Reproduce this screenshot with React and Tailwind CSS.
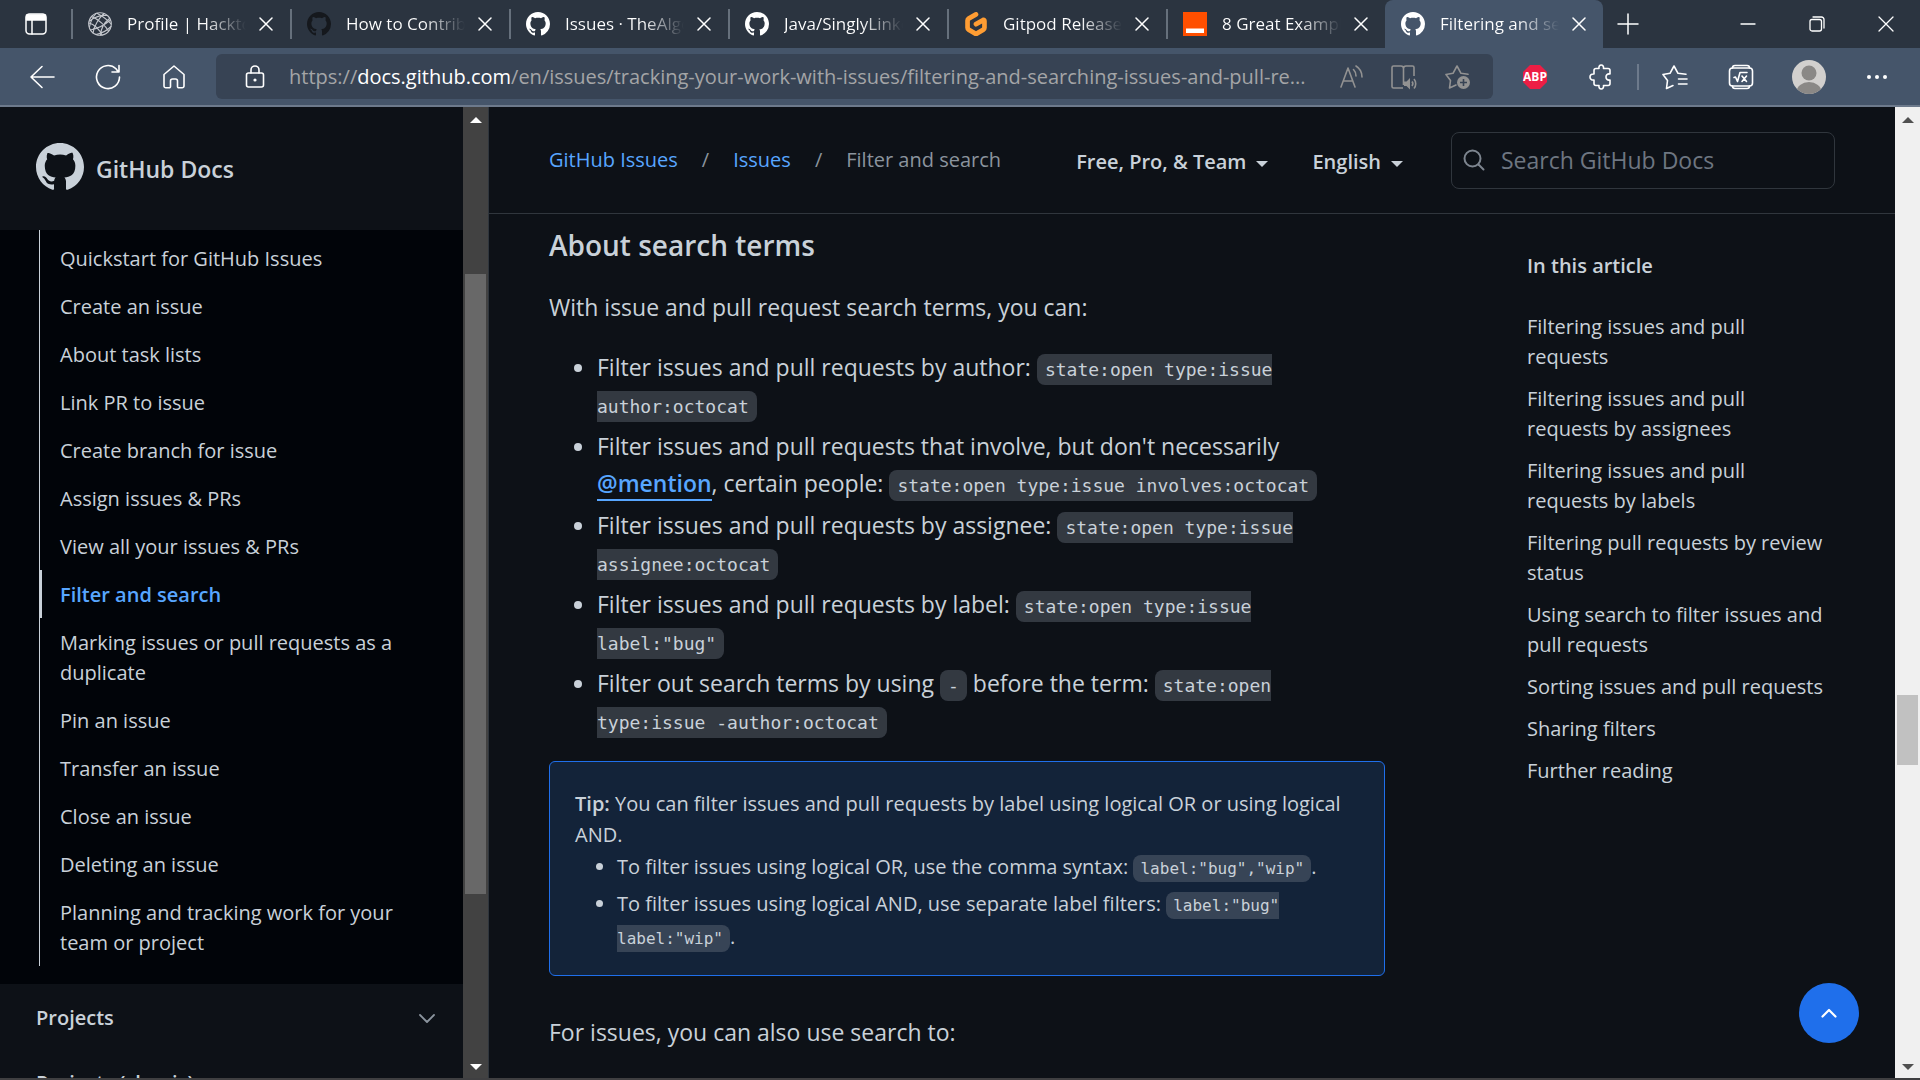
import React from "react";
import { SiGitpod } from "react-icons/si";

const MARK =
  "M8 0C3.58 0 0 3.58 0 8c0 3.54 2.29 6.53 5.47 7.59.4.07.55-.17.55-.38 0-.19-.01-.82-.01-1.49-2.01.37-2.53-.49-2.69-.94-.09-.23-.48-.94-.82-1.13-.28-.15-.68-.52-.01-.53.63-.01 1.08.58 1.23.82.72 1.21 1.87.87 2.33.66.07-.52.28-.87.51-1.07-1.78-.2-3.64-.89-3.64-3.95 0-.87.31-1.59.82-2.15-.08-.2-.36-1.02.08-2.12 0 0 .67-.21 2.2.82.64-.18 1.32-.27 2-.27.68 0 1.36.09 2 .27 1.53-1.04 2.2-.82 2.2-.82.44 1.1.16 1.92.08 2.12.51.56.82 1.27.82 2.15 0 3.07-1.87 3.75-3.65 3.95.29.25.54.73.54 1.48 0 1.07-.01 1.93-.01 2.2 0 .21.15.46.55.38A8.013 8.013 0 0016 8c0-4.42-3.58-8-8-8z";

function GitHubMark({ className }) {
  return (
    <svg viewBox="0 0 16 16" className={className} fill="currentColor" aria-hidden="true">
      <path d={MARK} />
    </svg>
  );
}

function Line({ className = "size-6", box = 24, width = 1.5, children }) {
  return (
    <svg
      viewBox={`0 0 ${box} ${box}`}
      className={className}
      fill="none"
      stroke="currentColor"
      strokeWidth={width}
      strokeLinecap="round"
      strokeLinejoin="round"
      aria-hidden="true"
    >
      {children}
    </svg>
  );
}

function GlobeIcon() {
  return (
    <Line className="size-6 text-[#c3c6cc]" width={1.1}>
      <circle cx="12" cy="12" r="11.3" />
      <path d="M9 1.200C14 4 20 8 23 12M3.500 4.500C10 7 18 14 20.500 19M1 11c5 1 11 7 13 12" />
      <path d="M16 1.500C11 6 6 14 5 21M21.500 6.500C17 10 13 16 12.500 23M8 1.500C5 5 2.500 9 1.500 15M1.500 9C8 4 14 3 19 3.500M2.500 18c6-1 14-5 20-10M8 22.500c6-1 11-4 15-8" />
    </Line>
  );
}

function DocIcon() {
  return (
    <svg viewBox="0 0 24 24" className="size-6" aria-hidden="true">
      <path fill="#ff4f00" d="M0 0h24v24H0z" />
      <path fill="#fff" d="M3 16.500h18v4.500H3z" />
    </svg>
  );
}

const TABS = [
  { title: "Profile | Hacktoberfest", icon: <GlobeIcon /> },
  { title: "How to Contribute", icon: <GitHubMark className="size-6 text-[#15181d]" /> },
  { title: "Issues · TheAlgorithms", icon: <GitHubMark className="size-6" /> },
  { title: "Java/SinglyLinkedList", icon: <GitHubMark className="size-6" /> },
  { title: "Gitpod Releases", icon: <SiGitpod className="size-6 text-[#ff9d33]" /> },
  { title: "8 Great Examples", icon: <DocIcon /> },
  { title: "Filtering and searching", icon: <GitHubMark className="size-6" />, active: true },
];

function CloseIcon() {
  return (
    <Line className="size-3.5" box={14}>
      <path d="M1 1l12 12M13 1L1 13" />
    </Line>
  );
}

function Tab({ tab }) {
  return (
    <div
      className={
        tab.active
          ? "flex h-12 w-[218px] min-w-0 items-center rounded-t-lg bg-[#45556a] pl-4 pr-3"
          : "flex h-12 w-[219px] min-w-0 items-center"
      }
    >
      {!tab.active && <span className="mr-[15px] h-[30px] w-0.5 shrink-0 bg-[#66707c]" />}
      <span className="shrink-0">{tab.icon}</span>
      <span className="ml-[15px] min-w-0 flex-1 overflow-hidden whitespace-nowrap bg-linear-to-r from-white from-65% to-transparent bg-clip-text text-[17px] text-transparent">
        {tab.title}
      </span>
      <button
        aria-label={`Close ${tab.title}`}
        className={tab.active ? "ml-2 flex w-6 justify-center" : "ml-2 mr-3 flex w-6 justify-center"}
      >
        <CloseIcon />
      </button>
    </div>
  );
}

function TabBar() {
  return (
    <div className="flex h-12 shrink-0 items-center bg-[#2b3440] text-white">
      <button aria-label="Tab actions" className="flex w-[71px] shrink-0 justify-center">
        <Line className="size-6">
          <rect x="2" y="2" width="20" height="20" rx="3.500" />
          <path d="M2.500 3h19v5h-19z" fill="currentColor" />
          <path d="M8 8v14" />
        </Line>
      </button>
      {TABS.map((tab) => (
        <Tab key={tab.title} tab={tab} />
      ))}
      <button aria-label="New tab" className="ml-3.5 shrink-0">
        <Line className="size-[22px]" box={22}>
          <path d="M11 1v20M1 11h20" />
        </Line>
      </button>
      <div className="ml-auto flex shrink-0">
        <button aria-label="Minimize" className="flex w-[69px] justify-center">
          <Line className="size-4" box={16} width={1.3}>
            <path d="M1 8h14" />
          </Line>
        </button>
        <button aria-label="Restore" className="flex w-[69px] justify-center">
          <Line className="size-4" box={16} width={1.3}>
            <rect x="1" y="3.500" width="11.500" height="11.500" rx="2" />
            <path d="M4 1h8.500A2.500 2.500 0 0 1 15 3.500V12" />
          </Line>
        </button>
        <button aria-label="Close window" className="flex w-[69px] justify-center">
          <Line className="size-4" box={16} width={1.3}>
            <path d="M1 1l14 14M15 1L1 15" />
          </Line>
        </button>
      </div>
    </div>
  );
}

function ToolButton({ label, children }) {
  return (
    <button aria-label={label} className="flex w-[66px] shrink-0 justify-center">
      {children}
    </button>
  );
}

function Toolbar() {
  return (
    <div className="flex h-[59px] shrink-0 items-center border-b-2 border-[#6d7a8c] bg-[#45556a] pl-[9px] pr-[14px] text-white">
      <ToolButton label="Back">
        <Line className="size-[26px]" box={26} width={1.6}>
          <path d="M25 13H2M13 2.500L2 13l11 10.500" />
        </Line>
      </ToolButton>
      <ToolButton label="Refresh">
        <Line className="size-[26px]" box={26} width={1.6}>
          <path d="M24.500 13A11.500 11.500 0 1 1 21 4.800L23 7.500M24 1.500V8h-7" />
        </Line>
      </ToolButton>
      <ToolButton label="Home">
        <Line className="size-[26px]" box={26} width={1.6}>
          <path d="M3 10.500L13 2l10 8.500V22a1.800 1.800 0 0 1-1.800 1.800h-3.400A1.300 1.300 0 0 1 16.500 22.500V17a2 2 0 0 0-2-2h-3a2 2 0 0 0-2 2v5.500a1.300 1.300 0 0 1-1.300 1.300H4.800A1.800 1.800 0 0 1 3 22z" />
        </Line>
      </ToolButton>

      <div className="ml-[9px] flex h-[45px] min-w-0 flex-1 items-center rounded-md bg-[#374354] pl-[27px] pr-[22px]">
        <Line className="size-6 shrink-0" width={1.6}>
          <rect x="3.500" y="8" width="17" height="14" rx="2" />
          <path d="M8 8V5a4 4 0 0 1 8 0v3" />
          <circle cx="12" cy="15" r=".8" fill="currentColor" />
        </Line>
        <div className="ml-[22px] min-w-0 flex-1 truncate text-[20px] text-[#a4a5a7]">
          https://<span className="text-white">docs.github.com</span>
          /en/issues/tracking-your-work-with-issues/filtering-and-searching-issues-and-pull-re...
        </div>
        <div className="flex shrink-0 items-center gap-7 text-[#929292]">
          <button aria-label="Read aloud">
            <Line width={1.6}>
              <path d="M2 22L9 3l7 19M4.500 16h9M14.500 4.500c2 2 2.500 4 2.500 6.500M17 1c4 2.500 6 6.500 6 11" />
            </Line>
          </button>
          <button aria-label="Immersive reader">
            <svg viewBox="0 0 26 26" className="size-[26px]" aria-hidden="true">
              <path
                d="M12 24H2.500A1.500 1.500 0 0 1 1 22.500v-19A1.500 1.500 0 0 1 2.500 2H10a2.500 2.500 0 0 1 2.500 2.500V21M12.500 4.500A2.500 2.500 0 0 1 15 2h6.500A1.500 1.500 0 0 1 23 3.500V12"
                fill="none"
                stroke="currentColor"
                strokeWidth="1.6"
              />
              <path d="M13 17.500h2.500L19 14v11.500L15.500 22H13z" fill="currentColor" />
              <path
                d="M21 17.500c1 1.300 1 3.200 0 4.500M23 15c2.300 2.700 2.300 7 0 9.500"
                fill="none"
                stroke="currentColor"
                strokeWidth="1.6"
              />
            </svg>
          </button>
          <button aria-label="Add to favorites">
            <svg viewBox="0 0 26 26" className="size-[26px]" aria-hidden="true">
              <path
                d="M11 21l-6.500 3 1-7.500L1 10.500l7-1.200L12 2l4 7.300 7 1"
                fill="none"
                stroke="currentColor"
                strokeWidth="1.6"
                strokeLinejoin="round"
                strokeLinecap="round"
              />
              <circle cx="18.500" cy="18.500" r="6.500" fill="currentColor" />
              <path d="M18.500 15v7M15 18.500h7" stroke="#374354" strokeWidth="1.6" />
            </svg>
          </button>
        </div>
      </div>

      <div className="ml-[9px] flex shrink-0 items-center">
        <ToolButton label="Adblock Plus">
          <span className="relative flex size-[26px] items-center justify-center">
            <svg viewBox="0 0 26 26" className="absolute inset-0" aria-hidden="true">
              <path d="M8 1h10l7 7v10l-7 7H8l-7-7V8z" fill="#ed1e45" />
            </svg>
            <span className="relative text-[12px] font-bold leading-none">ABP</span>
          </span>
        </ToolButton>
        <ToolButton label="Extensions">
          <Line className="size-[26px]" box={26} width={1.6}>
            <path d="M8 4.500h3C10.600 2.500 11.600 1 13.200 1s2.700 1.500 2.300 3.500H20a2 2 0 0 1 2 2V10c-2.800-.5-4 1-4 3s1.200 3.500 4 3v3.500a2 2 0 0 1-2 2h-4.500c.4 2-.7 3.500-2.300 3.500s-2.600-1.500-2.200-3.500H8a2 2 0 0 1-2-2V16c-2.500.3-4-1-4-3s1.500-3.300 4-3V6.500a2 2 0 0 1 2-2z" />
          </Line>
        </ToolButton>
        <span className="mx-[3px] h-[26px] w-0.5 bg-[#6d7a8c]" />
        <ToolButton label="Favorites">
          <Line className="size-[26px]" box={26} width={1.6}>
            <path d="M11 21.500l-6.500 3 1-8L1 10.500l7-1.200L12 2l4 7.300 8 .9M16.500 15H25M16.500 20H25" />
          </Line>
        </ToolButton>
        <ToolButton label="Math solver">
          <Line className="size-[26px]" box={26} width={1.6}>
            <rect x="1.500" y="4" width="23" height="18" rx="3" />
            <path d="M4.500 4c0-2 .8-2.500 2.500-2.500h12c1.700 0 2.500.5 2.500 2.500M4.500 22c0 2 .8 2.500 2.500 2.500h12c1.700 0 2.500-.5 2.500-2.500" />
            <path d="M6 13.500l1.500-.5 2 4.500L12 8.500h7M14 12l4.500 5.500M18.500 12L14 17.500" />
          </Line>
        </ToolButton>
        <ToolButton label="Profile">
          <svg viewBox="0 0 34 34" className="ml-1 size-[34px]" aria-hidden="true">
            <defs>
              <clipPath id="avatar">
                <circle cx="17" cy="17" r="17" />
              </clipPath>
            </defs>
            <g clipPath="url(#avatar)">
              <path fill="#d2d0ce" d="M0 0h34v34H0z" />
              <circle cx="17" cy="13" r="7.500" fill="#8a8886" />
              <ellipse cx="17" cy="32" rx="12.500" ry="10" fill="#8a8886" />
            </g>
          </svg>
        </ToolButton>
        <ToolButton label="Settings and more">
          <svg viewBox="0 0 20 6" className="ml-2 h-1.5 w-5" fill="currentColor" aria-hidden="true">
            <circle cx="2" cy="3" r="2" />
            <circle cx="10" cy="3" r="2" />
            <circle cx="18" cy="3" r="2" />
          </svg>
        </ToolButton>
      </div>
    </div>
  );
}

function Arrow({ down }) {
  return (
    <svg viewBox="0 0 12 6" className="h-1.5 w-3 shrink-0" fill="currentColor" aria-hidden="true">
      <path d={down ? "M0 0h12L6 6z" : "M0 6h12L6 0z"} />
    </svg>
  );
}

const NAV = [
  "Quickstart for GitHub Issues",
  "Create an issue",
  "About task lists",
  "Link PR to issue",
  "Create branch for issue",
  "Assign issues & PRs",
  "View all your issues & PRs",
  "Filter and search",
  "Marking issues or pull requests as a duplicate",
  "Pin an issue",
  "Transfer an issue",
  "Close an issue",
  "Deleting an issue",
  "Planning and tracking work for your team or project",
];

function Sidebar() {
  return (
    <aside className="flex w-[489px] shrink-0 border-r border-[#30363d]">
      <div className="flex min-w-0 flex-1 flex-col overflow-hidden">
        <a href="#" className="flex h-[123px] shrink-0 items-center gap-3 pb-[3px] pl-9">
          <GitHubMark className="size-12" />
          <span className="pt-1 text-[23px] font-semibold">GitHub Docs</span>
        </a>
        <nav className="shrink-0 bg-[#010409] pb-[18px] pl-[39px]">
          <ul className="border-l border-[#c9d1d9] pt-1">
            {NAV.map((item) => {
              const current = item === "Filter and search";
              return (
                <li
                  key={item}
                  className={current ? "border-l-2 border-[#c9d1d9]" : "border-l-2 border-transparent"}
                >
                  <a
                    href="#"
                    aria-current={current ? "page" : undefined}
                    className={
                      current
                        ? "block pb-2 pl-[18px] pr-12 pt-[10px] text-[20px] font-semibold leading-[30px] text-[#58a6ff]"
                        : "block pb-2 pl-[18px] pr-12 pt-[10px] text-[20px] leading-[30px]"
                    }
                  >
                    {item}
                  </a>
                </li>
              );
            })}
          </ul>
        </nav>
        <button className="flex h-[68px] shrink-0 items-center justify-between pl-9 pr-7 text-left text-[20px] font-semibold">
          Projects
          <Line className="size-4 text-[#8b949e]" box={16} width={1.8}>
            <path d="M1 5l7 7 7-7" />
          </Line>
        </button>
        <button className="h-[62px] shrink-0 pl-9 text-left text-[20px] font-semibold">
          Projects (classic)
        </button>
      </div>
      <div className="flex w-[25px] shrink-0 flex-col items-center bg-[#424242] pb-2 pt-[10px] text-white">
        <Arrow />
        <div className="flex w-full flex-1 flex-col px-0.5 py-2">
          <div className="h-[15.500%]" />
          <div className="h-[67%] bg-[#686868]" />
        </div>
        <Arrow down />
      </div>
    </aside>
  );
}

function Caret() {
  return (
    <svg viewBox="0 0 12 6" className="mt-1 h-1.5 w-3" fill="currentColor" aria-hidden="true">
      <path d="M0 0h12L6 6z" />
    </svg>
  );
}

function Header() {
  return (
    <header className="flex h-[107px] shrink-0 items-center border-b border-[#30363d] px-[60px]">
      <nav className="flex items-center gap-6 text-[20px] text-[#8b949e]">
        <a href="#" className="text-[#58a6ff]">
          GitHub Issues
        </a>
        <span>/</span>
        <a href="#" className="text-[#58a6ff]">
          Issues
        </a>
        <span>/</span>
        <span>Filter and search</span>
      </nav>
      <div className="ml-auto flex items-center">
        <button className="mr-11 flex items-center gap-2.5 pt-1 text-[20px] font-semibold">
          Free, Pro, &amp; Team
          <Caret />
        </button>
        <button className="mr-12 flex items-center gap-2.5 pt-1 text-[20px] font-semibold">
          English
          <Caret />
        </button>
        <label className="flex h-[57px] w-[384px] items-center rounded-lg border border-[#30363d] px-[11px]">
          <Line className="size-[22px] shrink-0 text-[#7d858f]" box={22} width={2}>
            <circle cx="9.500" cy="9.500" r="8" />
            <path d="M15.500 15.500l5 5" />
          </Line>
          <input
            type="text"
            aria-label="Search GitHub Docs"
            placeholder="Search GitHub Docs"
            className="ml-4 min-w-0 flex-1 bg-transparent text-[23px] outline-none placeholder:text-[#6e7681]"
          />
        </label>
      </div>
    </header>
  );
}

function Code({ children }) {
  return (
    <code className="rounded-lg bg-[#6e7681]/40 px-2 py-[5px] font-['DejaVu_Sans_Mono',monospace] text-[18px] leading-none">
      {children}
    </code>
  );
}

function SmallCode({ children }) {
  return (
    <code className="rounded-lg bg-[#6e7681]/40 px-[7px] py-1 font-['DejaVu_Sans_Mono',monospace] text-[16px] leading-none">
      {children}
    </code>
  );
}

function Article() {
  return (
    <article className="min-w-0 flex-1 pt-[11px] text-[23px] leading-[37px]">
      <h2 className="text-[28px] font-semibold leading-10">About search terms</h2>
      <p className="mt-6">With issue and pull request search terms, you can:</p>
      <ul className="mt-[23px] list-disc space-y-[5px] pl-12">
        <li>
          Filter issues and pull requests by author: <Code>state:open type:issue author:octocat</Code>
        </li>
        <li>
          Filter issues and pull requests that involve, but don't necessarily{" "}
          <a href="#" className="border-b-2 border-[#58a6ff] font-semibold text-[#58a6ff]">
            @mention
          </a>
          , certain people: <Code>state:open type:issue involves:octocat</Code>
        </li>
        <li>
          Filter issues and pull requests by assignee:{" "}
          <Code>state:open type:issue assignee:octocat</Code>
        </li>
        <li>
          Filter issues and pull requests by label: <Code>state:open type:issue label:"bug"</Code>
        </li>
        <li>
          Filter out search terms by using <Code>-</Code> before the term:{" "}
          <Code>state:open type:issue -author:octocat</Code>
        </li>
      </ul>
      <div className="mt-[22px] rounded-md border border-[#1f6feb] bg-[#132339] px-[25px] pb-[22px] pt-[26px] text-[20px] leading-[31px]">
        <p>
          <strong className="font-semibold">Tip:</strong> You can filter issues and pull requests by
          label using logical OR or using logical AND.
        </p>
        <ul className="list-disc space-y-1 pl-[42px] leading-[33px]">
          <li>
            To filter issues using logical OR, use the comma syntax:{" "}
            <SmallCode>label:"bug","wip"</SmallCode>.
          </li>
          <li>
            To filter issues using logical AND, use separate label filters:{" "}
            <SmallCode>label:"bug" label:"wip"</SmallCode>.
          </li>
        </ul>
      </div>
      <p className="mt-[38px]">For issues, you can also use search to:</p>
    </article>
  );
}

const TOC = [
  "Filtering issues and pull requests",
  "Filtering issues and pull requests by assignees",
  "Filtering issues and pull requests by labels",
  "Filtering pull requests by review status",
  "Using search to filter issues and pull requests",
  "Sorting issues and pull requests",
  "Sharing filters",
  "Further reading",
];

function Toc() {
  return (
    <aside className="w-[300px] shrink-0 pt-[37px] text-[20px] leading-[30px]">
      <h2 className="font-semibold">In this article</h2>
      <ul className="mt-[31px] space-y-3">
        {TOC.map((item) => (
          <li key={item}>
            <a href="#">{item}</a>
          </li>
        ))}
      </ul>
    </aside>
  );
}

export default function App() {
  return (
    <div className="flex h-screen flex-col overflow-hidden border-b-2 border-[#3f3f41] bg-[#0d1117] font-['Open_Sans','Noto_Sans',sans-serif] text-[#c9d1d9]">
      <TabBar />
      <Toolbar />
      <div className="flex min-h-0 flex-1">
        <Sidebar />
        <div className="relative flex min-w-0 flex-1 flex-col overflow-hidden">
          <Header />
          <main className="flex min-h-0 flex-1 gap-[142px] overflow-hidden pl-[60px] pr-[68px]">
            <Article />
            <Toc />
          </main>
          <button
            aria-label="Scroll to top"
            className="absolute bottom-[35px] right-9 flex size-[60px] items-center justify-center rounded-full bg-[#1f6feb] text-white"
          >
            <Line className="size-4" box={16} width={2.2}>
              <path d="M1.500 11.500L8 5l6.500 6.500" />
            </Line>
          </button>
        </div>
        <div className="flex w-[25px] shrink-0 flex-col items-center bg-[#f0f0f0] pb-2 pt-[10px] text-[#505050]">
          <Arrow />
          <div className="flex w-full flex-1 flex-col px-0.5 py-2">
            <div className="h-[61%]" />
            <div className="h-[7.500%] bg-[#c1c1c1]" />
          </div>
          <Arrow down />
        </div>
      </div>
    </div>
  );
}
